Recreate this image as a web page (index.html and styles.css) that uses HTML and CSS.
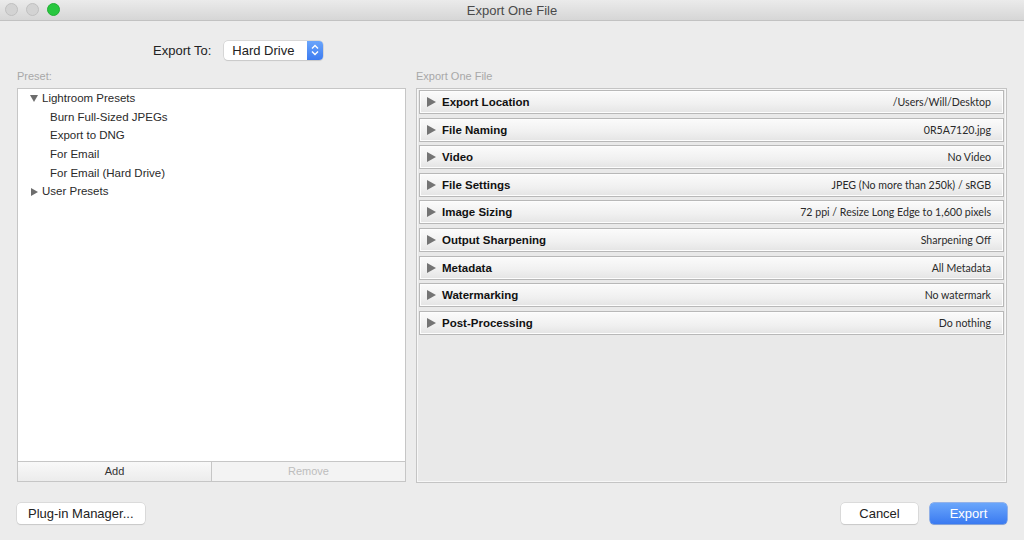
FILE: index.html
```html
<!DOCTYPE html>
<html lang="en">
<head>
  <meta charset="UTF-8" />
  <title>Export One File</title>
  <link rel="stylesheet" href="styles.css">
</head>
<body>
  <div class="titlebar">
    <div class="lights">
      <span class="light"></span>
      <span class="light"></span>
      <span class="light green"></span>
    </div>
    <div class="title">Export One File</div>
  </div>

  <div class="export-to">
    <span class="export-label">Export To:</span>
    <div class="select">
      <span>Hard Drive</span>
      <span class="stepper">
        <svg width="8" height="12" viewBox="0 0 8 12"><path d="M1 4.5 L4 1.5 L7 4.5 M1 7.5 L4 10.5 L7 7.5" fill="none" stroke="#fff" stroke-width="1.4"/></svg>
      </span>
    </div>
  </div>

  <div class="columns">
    <div class="col-left">
      <div class="col-label">Preset:</div>
      <div class="preset-box">
        <ul class="tree">
          <li class="folder"><span class="tri down"></span>Lightroom Presets</li>
          <li class="child">Burn Full-Sized JPEGs</li>
          <li class="child">Export to DNG</li>
          <li class="child">For Email</li>
          <li class="child">For Email (Hard Drive)</li>
          <li class="folder"><span class="tri right"></span>User Presets</li>
        </ul>
        <div class="add-remove">
          <div class="ar-btn">Add</div>
          <div class="ar-btn disabled">Remove</div>
        </div>
      </div>
    </div>

    <div class="col-right">
      <div class="col-label">Export One File</div>
      <div class="sections">
        <div class="section"><span class="arrow"></span><b>Export Location</b><span class="value">/Users/Will/Desktop</span></div>
        <div class="section"><span class="arrow"></span><b>File Naming</b><span class="value">0R5A7120.jpg</span></div>
        <div class="section"><span class="arrow"></span><b>Video</b><span class="value">No Video</span></div>
        <div class="section"><span class="arrow"></span><b>File Settings</b><span class="value">JPEG (No more than 250k) / sRGB</span></div>
        <div class="section"><span class="arrow"></span><b>Image Sizing</b><span class="value">72 ppi / Resize Long Edge to 1,600 pixels</span></div>
        <div class="section"><span class="arrow"></span><b>Output Sharpening</b><span class="value">Sharpening Off</span></div>
        <div class="section"><span class="arrow"></span><b>Metadata</b><span class="value">All Metadata</span></div>
        <div class="section"><span class="arrow"></span><b>Watermarking</b><span class="value">No watermark</span></div>
        <div class="section"><span class="arrow"></span><b>Post-Processing</b><span class="value">Do nothing</span></div>
      </div>
    </div>
  </div>

  <div class="footer">
    <button class="btn">Plug-in Manager...</button>
    <div class="footer-right">
      <button class="btn cancel">Cancel</button>
      <button class="btn primary">Export</button>
    </div>
  </div>
</body>
</html>
```

FILE: styles.css
```css
html, body {
  margin: 0;
  padding: 0;
}
body {
  width: 1024px;
  height: 540px;
  background-color: #ececec;
  font-family: "Liberation Sans", Arial, sans-serif;
  color: #222;
  overflow: hidden;
}
.titlebar {
  position: relative;
  height: 20px;
  background: linear-gradient(#ebebeb, #d6d6d6);
  border-bottom: 1px solid #c2c2c2;
  display: flex;
  align-items: center;
  justify-content: center;
}
.lights {
  position: absolute;
  left: 5px;
  top: 3px;
  display: flex;
  gap: 8px;
}
.light {
  width: 11px;
  height: 11px;
  border-radius: 50%;
  background-color: #d3d3d3;
  border: 0.5px solid #c0c0c0;
}
.light.green {
  background-color: #28c73f;
  border-color: #22b035;
}
.title {
  font-size: 13px;
  color: #4a4a4a;
}
.export-to {
  display: flex;
  align-items: center;
  height: 20px;
  margin-top: 19px;
  padding-left: 153px;
}
.export-label {
  font-size: 13px;
  color: #222;
  margin-right: 13px;
}
.select {
  display: flex;
  align-items: center;
  justify-content: space-between;
  width: 99px;
  height: 19px;
  background: #fff;
  border-radius: 4px;
  box-shadow: 0 0 0 0.5px #c4c4c4, 0 1px 1px rgba(0,0,0,0.12);
  font-size: 13px;
  padding-left: 8px;
  box-sizing: border-box;
}
.stepper {
  width: 16px;
  height: 19px;
  border-radius: 0 4px 4px 0;
  background: linear-gradient(#6aa5fb, #3d7cf1);
  display: flex;
  align-items: center;
  justify-content: center;
}
.columns {
  display: flex;
  gap: 10px;
  padding: 0 17px;
  margin-top: 9px;
}
.col-label {
  font-size: 11px;
  color: #a8a8a8;
  height: 17px;
  line-height: 14px;
  margin-bottom: 2px;
}
.col-left {
  width: 389px;
}
.col-right {
  width: 591px;
}
.preset-box {
  height: 394px;
  border: 1px solid #c6c6c6;
  background: #fff;
  display: flex;
  flex-direction: column;
  box-sizing: border-box;
}
.tree {
  list-style: none;
  margin: 0;
  padding: 0;
  flex: 1;
  font-size: 11.5px;
  color: #2a2a2a;
}
.tree li {
  height: 18.7px;
  line-height: 18.7px;
}
.folder {
  padding-left: 12px;
  display: flex;
  align-items: center;
}
.child {
  padding-left: 32px;
}
.tri {
  width: 0;
  height: 0;
  margin-right: 4px;
}
.tri.down {
  border-left: 4px solid transparent;
  border-right: 4px solid transparent;
  border-top: 7px solid #6d6d6d;
}
.tri.right {
  border-top: 4px solid transparent;
  border-bottom: 4px solid transparent;
  border-left: 7px solid #6d6d6d;
  margin-left: 1px;
}
.add-remove {
  display: flex;
  height: 19px;
  border-top: 1px solid #c6c6c6;
}
.ar-btn {
  flex: 1;
  text-align: center;
  font-size: 11px;
  line-height: 19px;
  color: #333;
  background: linear-gradient(#f9f9f9, #ececec);
}
.ar-btn + .ar-btn {
  border-left: 1px solid #c6c6c6;
}
.ar-btn.disabled {
  color: #bdbdbd;
  background: #f3f3f3;
}
.sections {
  height: 395px;
  box-sizing: border-box;
  border: 1px solid #c4c4c4;
  box-shadow: inset 0 0 0 1px #f7f7f7;
  background: #e9e9e9;
  padding: 1px 2px;
  display: flex;
  flex-direction: column;
  gap: 3.6px;
}
.section {
  height: 24px;
  box-sizing: border-box;
  border: 1px solid #b8b8b8;
  box-shadow: inset 0 0 0 1px #fdfdfd;
  background: linear-gradient(#fbfbfb, #f0f0f0 60%, #e4e4e4);
  display: flex;
  align-items: center;
  padding: 0 12px 0 7px;
  font-size: 11px;
}
.arrow {
  width: 0;
  height: 0;
  border-top: 5px solid transparent;
  border-bottom: 5px solid transparent;
  border-left: 9px solid #747474;
  margin-right: 6px;
}
.section b {
  font-weight: bold;
  color: #111;
  font-size: 11.5px;
}
.value {
  margin-left: auto;
  font-family: "Lato", "Liberation Sans", sans-serif;
  font-size: 10.6px;
  color: #2a2a2a;
}
.footer {
  display: flex;
  justify-content: space-between;
  padding: 0 17px;
  margin-top: 20px;
}
.footer-right {
  display: flex;
  gap: 12px;
}
.btn {
  height: 21px;
  border: none;
  border-radius: 4px;
  background: #fff;
  box-shadow: 0 0 0 0.5px #c9c9c9, 0 1px 1px rgba(0,0,0,0.15);
  font-family: "Liberation Sans", Arial, sans-serif;
  font-size: 13px;
  color: #222;
  padding: 0 11px;
}
.btn.cancel {
  width: 77px;
}
.btn.primary {
  width: 77px;
  color: #fff;
  background: linear-gradient(#6aa6fb, #3a7af1);
  box-shadow: 0 0 0 0.5px #3a78e6, 0 1px 1px rgba(0,0,0,0.15);
}
```
